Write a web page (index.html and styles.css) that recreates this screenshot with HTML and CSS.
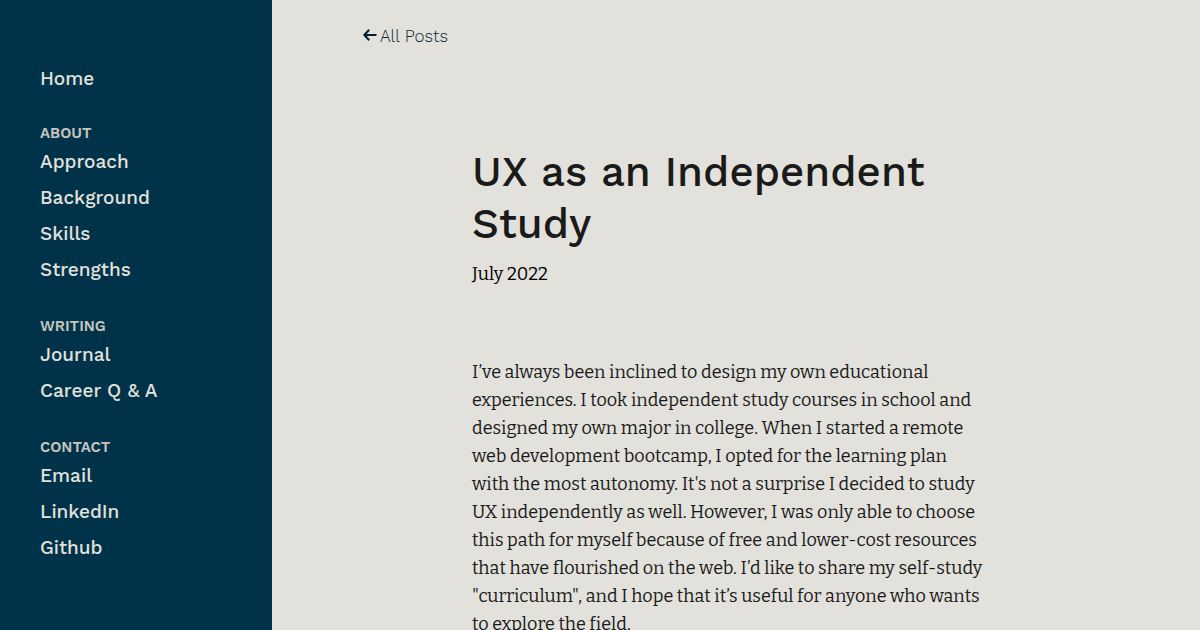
FILE: index.html
```html
<!DOCTYPE html>
<html lang="en">
<head>
<meta charset="utf-8">
<meta name="viewport" content="width=device-width, initial-scale=1">
<title>UX as an Independent Study</title>
<link rel="stylesheet" href="styles.css">
</head>
<body>
<div class="layout">
  <nav class="sidebar" aria-label="Main">
    <a class="home" href="#home">Home</a>
    <section class="nav-group">
      <h2>About</h2>
      <ul class="nav-list">
        <li><a href="#approach">Approach</a></li>
        <li><a href="#background">Background</a></li>
        <li><a href="#skills">Skills</a></li>
        <li><a href="#strengths">Strengths</a></li>
      </ul>
    </section>
    <section class="nav-group">
      <h2>Writing</h2>
      <ul class="nav-list">
        <li><a href="#journal">Journal</a></li>
        <li><a href="#career">Career Q &amp; A</a></li>
      </ul>
    </section>
    <section class="nav-group">
      <h2>Contact</h2>
      <ul class="nav-list">
        <li><a href="#email">Email</a></li>
        <li><a href="#linkedin">LinkedIn</a></li>
        <li><a href="#github">Github</a></li>
      </ul>
    </section>
  </nav>
  <main class="content">
    <a class="back" href="#posts"><svg class="back-icon" viewBox="0 0 14 14" aria-hidden="true"><path d="M13.5 6H1.5M6.2 .8L1.3 6L6.2 11.2"/></svg>All Posts</a>
    <article class="post">
      <h1>UX as an Independent Study</h1>
      <p class="date">July 2022</p>
      <p class="body">I’ve always been inclined to design my own educational experiences. I took independent study courses in school and designed my own major in college. When I started a remote web development bootcamp, I opted for the learning plan with the most autonomy. It's not a surprise I decided to study UX independently as well. However, I was only able to choose this path for myself because of free and lower-cost resources that have flourished on the web. I’d like to share my self-study "curriculum", and I hope that it’s useful for anyone who wants to explore the field.</p>
    </article>
  </main>
</div>
</body>
</html>
```
FILE: styles.css
```css
* { box-sizing: border-box; }
body {
  margin: 0;
  background: #e2e1dc;
  color: #1a1a18;
  font-family: "Work Sans", Inter, sans-serif;
}
.layout {
  display: grid;
  grid-template-columns: 272px 1fr;
  height: 100vh;
  overflow: hidden;
}
.sidebar {
  padding: 63px 40px;
  background: #003349;
  color: #e2e1dc;
}
.sidebar a {
  color: inherit;
  font-size: 19px;
  font-weight: 500;
  text-decoration: none;
}
.home {
  display: block;
  line-height: 32px;
}
.nav-list {
  margin: 0;
  padding: 0;
  list-style: none;
  line-height: 36px;
}
.nav-list a { display: block; }
.nav-group { margin-top: 28px; }
.nav-group h2 {
  margin: 0;
  color: #c7c5be;
  font-size: 15px;
  font-weight: 600;
  line-height: 21px;
  text-transform: uppercase;
}
.content { padding: 24px 90px; overflow: auto; scrollbar-width: none; }
.back {
  display: inline-flex;
  align-items: center;
  gap: 3px;
  padding-left: 1px;
  color: #0e2530;
  font-size: 17px;
  font-weight: 300;
  line-height: 24px;
  text-decoration: none;
}
.back-icon {
  width: 14px;
  height: 14px;
  fill: none;
  stroke: #00202e;
  stroke-width: 2;
  stroke-linejoin: round;
}
.post {
  max-width: 528px;
  margin: 98px auto 0;
  padding-right: 16px;
}
.post h1 {
  margin: 0;
  font-size: 42px;
  font-weight: 500;
  line-height: 52px;
}
.date {
  margin: 10px 0 0;
  color: #000000;
  font-family: Bitter, "Noto Serif", "DejaVu Serif", serif;
  font-size: 18px;
  line-height: 28px;
}
.body {
  margin: 70px 0 0;
  font-family: Bitter, "Noto Serif", "Liberation Serif", serif;
  font-size: 18px;
  line-height: 28px;
}
```
